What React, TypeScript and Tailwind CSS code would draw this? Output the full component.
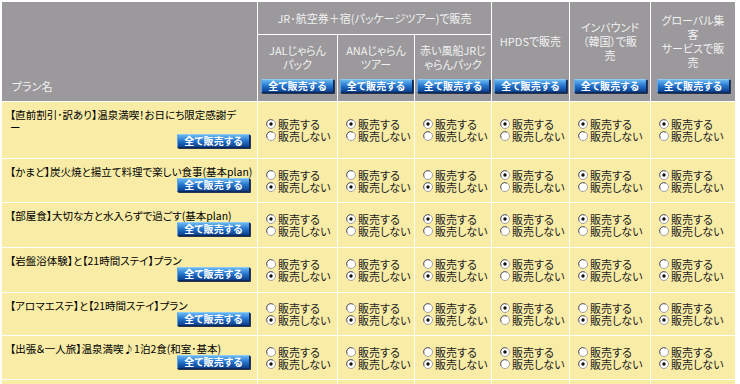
import React from "react";

type Plan = { name: string; sell: boolean[] };

const plans: Plan[] = [
  { name: "【直前割引･訳あり】温泉満喫！お日にち限定感謝デ\nー", sell: [true, true, true, true, true, true] },
  { name: "【かまど】炭火焼と揚立て料理で楽しい食事(基本plan)", sell: [false, false, false, true, true, true] },
  { name: "【部屋食】大切な方と水入らずで過ごす(基本plan)", sell: [true, true, true, true, true, true] },
  { name: "【岩盤浴体験】と【21時間ステイ】プラン", sell: [false, false, false, true, false, false] },
  { name: "【アロマエステ】と【21時間ステイ】プラン", sell: [false, false, false, true, false, false] },
  { name: "【出張＆一人旅】温泉満喫♪1泊2食(和室･基本)", sell: [false, false, false, true, false, false] },
];

function SellAllButton() {
  return (
    <button
      type="button"
      className="w-[73px] h-[14px] shrink-0 overflow-hidden rounded-[1px] border border-t-[#8ccaf6] border-l-[#5aa6e6] border-r-[#0b2a5c] border-b-[#0b2a5c] bg-linear-to-b from-[#66b6f2] via-[#2473cc] to-[#0c3f8c] text-white text-[10px] font-bold leading-none tracking-[0.3px] flex items-center justify-center shadow-[1px_1px_0_#2a3550]"
    >
      全て販売する
    </button>
  );
}

function RadioMark({ on }: { on: boolean }) {
  return (
    <svg width="10" height="10" viewBox="0 0 10 10" className="shrink-0">
      <circle cx="5" cy="5" r="4.5" fill="#ffffff" stroke="#a0a0a0" />
      <path d="M1.2 6.8 A4.1 4.1 0 0 1 6.8 1.2" fill="none" stroke="#5a5a5a" strokeWidth="0.9" />
      {on && <circle cx="5" cy="5" r="1.7" fill="#111" />}
    </svg>
  );
}

function SellChoice({ sell }: { sell: boolean }) {
  return (
    <div className="bg-[#f8eca6] flex flex-col justify-center pl-[8px] text-[11px] text-[#222]">
      <label className="flex items-center gap-[2px] h-[12px] leading-[12px]">
        <RadioMark on={sell} />
        <span>販売する</span>
      </label>
      <label className="flex items-center gap-[2px] h-[12px] leading-[12px]">
        <RadioMark on={!sell} />
        <span>販売しない</span>
      </label>
    </div>
  );
}

function HeadCell({ lines, className = "" }: { lines: string[]; className?: string }) {
  return (
    <div className={`bg-[#9b999b] flex flex-col items-center pb-[8px] ${className}`}>
      <div className="flex-1 flex flex-col items-center justify-center text-center text-[11px] leading-[14px] text-[#f2f2f2]">
        {lines.map((l, i) => (
          <span key={i}>{l}</span>
        ))}
      </div>
      <SellAllButton />
    </div>
  );
}

export default function App() {
  return (
    <div className="h-[384px] w-[740px] overflow-hidden bg-white font-['Noto_Sans_CJK_JP','Noto_Sans',sans-serif] [font-feature-settings:'palt']">
      <div className="p-[2px]">
        <div className="grid w-max gap-px bg-white grid-cols-[255px_79px_76px_76px_77px_80px_84px] grid-rows-[32px_66px_56px_43px_44px_44px_42px_43px_43px]">
          {/* header */}
          <div className="row-span-2 bg-[#9b999b] flex items-end pl-[10px] pb-[7px] text-[11px] text-[#f2f2f2]">
            プラン名
          </div>
          <div className="col-span-3 bg-[#9b999b] flex items-center justify-center text-[11px] text-[#f2f2f2]">
            JR･航空券＋宿(パッケージツアー)で販売
          </div>
          <HeadCell lines={["HPDSで販売"]} className="row-span-2" />
          <HeadCell lines={["インバウンド", "（韓国）で販", "売"]} className="row-span-2" />
          <HeadCell lines={["グローバル集", "客", "サービスで販", "売"]} className="row-span-2" />
          <HeadCell lines={["JALじゃらん", "パック"]} />
          <HeadCell lines={["ANAじゃらん", "ツアー"]} />
          <HeadCell lines={["赤い風船JRじ", "ゃらんパック"]} />

          {/* plan rows */}
          {plans.map((p, i) => (
            <React.Fragment key={i}>
              <div className="bg-[#f8eca6] flex flex-col pt-[6px] pl-[8px] pr-[7px]">
                <div className="text-[10.5px] leading-[13px] h-auto text-black whitespace-pre">{p.name}</div>
                <div className="flex justify-end">
                  <SellAllButton />
                </div>
              </div>
              {p.sell.map((s, j) => (
                <SellChoice key={j} sell={s} />
              ))}
            </React.Fragment>
          ))}

          {/* next row, continues below */}
          {Array.from({ length: 7 }).map((_, k) => (
            <div key={k} className="bg-[#f8eca6]" />
          ))}
        </div>
      </div>
    </div>
  );
}
